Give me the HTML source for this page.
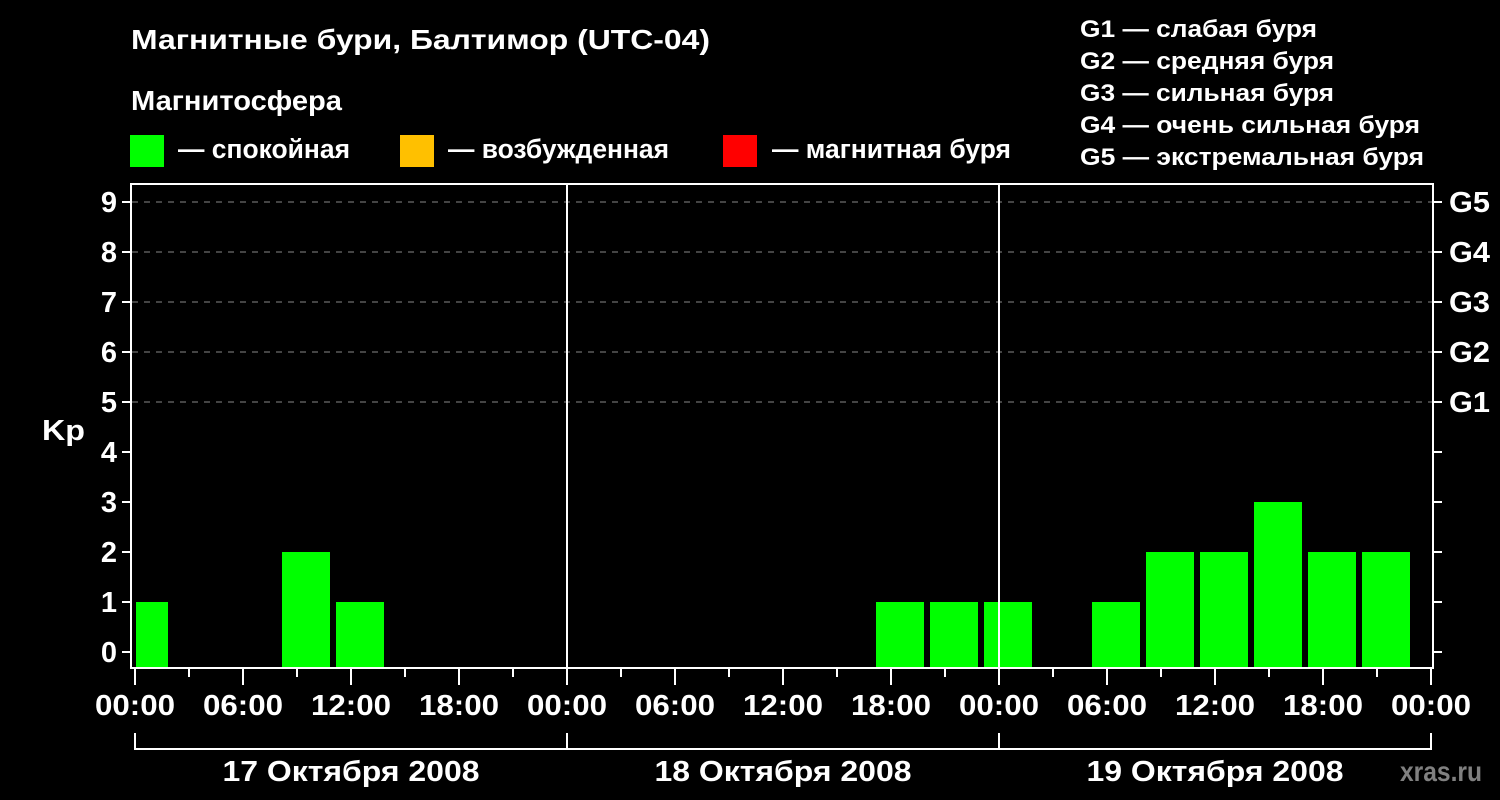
<!DOCTYPE html>
<html><head><meta charset="utf-8"><style>html,body{margin:0;padding:0;background:#000;width:1500px;height:800px;overflow:hidden}svg{display:block}text{font-family:"Liberation Sans",sans-serif;font-weight:bold;fill:#fff}</style></head><body>
<svg width="1500" height="800" xmlns="http://www.w3.org/2000/svg">
<rect width="1500" height="800" fill="#000"/>
<text x="131" y="49" font-size="28" textLength="579" lengthAdjust="spacingAndGlyphs">Магнитные бури, Балтимор (UTC-04)</text>
<text x="131" y="110" font-size="28" textLength="211" lengthAdjust="spacingAndGlyphs">Магнитосфера</text>
<rect x="130" y="135" width="34" height="32" fill="#00ff00"/>
<rect x="400" y="135" width="34" height="32" fill="#ffc000"/>
<rect x="723" y="135" width="34" height="32" fill="#ff0000"/>
<text x="178" y="158" font-size="27" textLength="172" lengthAdjust="spacingAndGlyphs">— спокойная</text>
<text x="448" y="158" font-size="27" textLength="221" lengthAdjust="spacingAndGlyphs">— возбужденная</text>
<text x="772" y="158" font-size="27" textLength="239" lengthAdjust="spacingAndGlyphs">— магнитная буря</text>
<g font-size="24">
<text x="1080" y="37" textLength="237" lengthAdjust="spacingAndGlyphs">G1 — слабая буря</text>
<text x="1080" y="69" textLength="254" lengthAdjust="spacingAndGlyphs">G2 — средняя буря</text>
<text x="1080" y="101" textLength="254" lengthAdjust="spacingAndGlyphs">G3 — сильная буря</text>
<text x="1080" y="133" textLength="340" lengthAdjust="spacingAndGlyphs">G4 — очень сильная буря</text>
<text x="1080" y="165" textLength="344" lengthAdjust="spacingAndGlyphs">G5 — экстремальная буря</text>
</g>
<g stroke="#888" stroke-width="1" stroke-dasharray="6,6">
<line x1="132" y1="202" x2="1432" y2="202"/><line x1="132" y1="252" x2="1432" y2="252"/><line x1="132" y1="302" x2="1432" y2="302"/><line x1="132" y1="352" x2="1432" y2="352"/><line x1="132" y1="402" x2="1432" y2="402"/>
</g>
<g fill="#00ff00">
<rect x="136" y="602" width="32" height="66"/>
<rect x="282" y="552" width="48" height="116"/>
<rect x="336" y="602" width="48" height="66"/>
<rect x="876" y="602" width="48" height="66"/>
<rect x="930" y="602" width="48" height="66"/>
<rect x="984" y="602" width="48" height="66"/>
<rect x="1092" y="602" width="48" height="66"/>
<rect x="1146" y="552" width="48" height="116"/>
<rect x="1200" y="552" width="48" height="116"/>
<rect x="1254" y="502" width="48" height="166"/>
<rect x="1308" y="552" width="48" height="116"/>
<rect x="1362" y="552" width="48" height="116"/>
</g>
<g stroke="#fff" fill="none">
<rect x="131" y="184" width="1302" height="484" stroke-width="2"/>
<line x1="567" y1="184" x2="567" y2="668" stroke-width="2"/>
<line x1="999" y1="184" x2="999" y2="668" stroke-width="2"/>
<g stroke-width="2">
<line x1="122" y1="202" x2="131" y2="202"/><line x1="122" y1="252" x2="131" y2="252"/><line x1="122" y1="302" x2="131" y2="302"/><line x1="122" y1="352" x2="131" y2="352"/><line x1="122" y1="402" x2="131" y2="402"/><line x1="122" y1="452" x2="131" y2="452"/><line x1="122" y1="502" x2="131" y2="502"/><line x1="122" y1="552" x2="131" y2="552"/><line x1="122" y1="602" x2="131" y2="602"/><line x1="122" y1="652" x2="131" y2="652"/>
<line x1="1433" y1="202" x2="1442" y2="202"/><line x1="1433" y1="252" x2="1442" y2="252"/><line x1="1433" y1="302" x2="1442" y2="302"/><line x1="1433" y1="352" x2="1442" y2="352"/><line x1="1433" y1="402" x2="1442" y2="402"/><line x1="1433" y1="452" x2="1442" y2="452"/><line x1="1433" y1="502" x2="1442" y2="502"/><line x1="1433" y1="552" x2="1442" y2="552"/><line x1="1433" y1="602" x2="1442" y2="602"/><line x1="1433" y1="652" x2="1442" y2="652"/>
</g>
<g stroke-width="2">
<path d="M135 669V685M189 669V677M243 669V685M297 669V677M351 669V685M405 669V677M459 669V685M513 669V677M567 669V685M621 669V677M675 669V685M729 669V677M783 669V685M837 669V677M891 669V685M945 669V677M999 669V685M1053 669V677M1107 669V685M1161 669V677M1215 669V685M1269 669V677M1323 669V685M1377 669V677M1431 669V685"/>
<path d="M135 733V749H1431V733M567 733V749M999 733V749"/>
</g>
</g>
<g font-size="29" text-anchor="end">
<text x="117" y="212">9</text><text x="117" y="262">8</text><text x="117" y="312">7</text><text x="117" y="362">6</text><text x="117" y="412">5</text><text x="117" y="462">4</text><text x="117" y="512">3</text><text x="117" y="562">2</text><text x="117" y="612">1</text><text x="117" y="662">0</text>
</g>
<text x="42" y="440" font-size="29" textLength="43" lengthAdjust="spacingAndGlyphs">Kp</text>
<g font-size="29">
<text x="1449" y="212" textLength="41" lengthAdjust="spacingAndGlyphs">G5</text><text x="1449" y="262" textLength="41" lengthAdjust="spacingAndGlyphs">G4</text><text x="1449" y="312" textLength="41" lengthAdjust="spacingAndGlyphs">G3</text><text x="1449" y="362" textLength="41" lengthAdjust="spacingAndGlyphs">G2</text><text x="1449" y="412" textLength="41" lengthAdjust="spacingAndGlyphs">G1</text>
</g>
<g font-size="29" text-anchor="middle">
<text x="135" y="715" textLength="80" lengthAdjust="spacingAndGlyphs">00:00</text><text x="243" y="715" textLength="80" lengthAdjust="spacingAndGlyphs">06:00</text><text x="351" y="715" textLength="80" lengthAdjust="spacingAndGlyphs">12:00</text><text x="459" y="715" textLength="80" lengthAdjust="spacingAndGlyphs">18:00</text><text x="567" y="715" textLength="80" lengthAdjust="spacingAndGlyphs">00:00</text><text x="675" y="715" textLength="80" lengthAdjust="spacingAndGlyphs">06:00</text><text x="783" y="715" textLength="80" lengthAdjust="spacingAndGlyphs">12:00</text><text x="891" y="715" textLength="80" lengthAdjust="spacingAndGlyphs">18:00</text><text x="999" y="715" textLength="80" lengthAdjust="spacingAndGlyphs">00:00</text><text x="1107" y="715" textLength="80" lengthAdjust="spacingAndGlyphs">06:00</text><text x="1215" y="715" textLength="80" lengthAdjust="spacingAndGlyphs">12:00</text><text x="1323" y="715" textLength="80" lengthAdjust="spacingAndGlyphs">18:00</text><text x="1431" y="715" textLength="80" lengthAdjust="spacingAndGlyphs">00:00</text>
<text x="351" y="781" textLength="257" lengthAdjust="spacingAndGlyphs">17 Октября 2008</text>
<text x="783" y="781" textLength="257" lengthAdjust="spacingAndGlyphs">18 Октября 2008</text>
<text x="1215" y="781" textLength="257" lengthAdjust="spacingAndGlyphs">19 Октября 2008</text>
</g>
<text x="1400" y="781" font-size="28" style="fill:#808080" textLength="82" lengthAdjust="spacingAndGlyphs">xras.ru</text>
</svg>
</body></html>
